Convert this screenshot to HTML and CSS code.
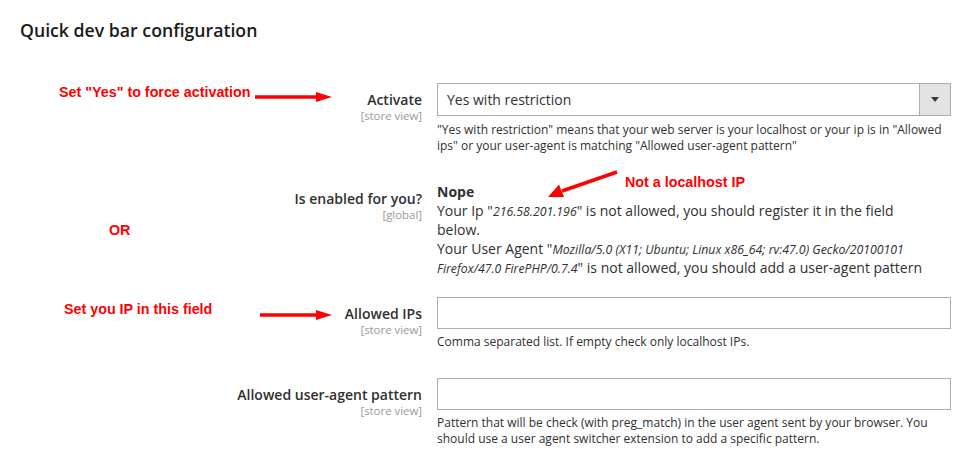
FILE: index.html
```html
<!DOCTYPE html>
<html>
<head>
<meta charset="utf-8">
<link rel="stylesheet" href="styles.css">
</head>
<body>
<div class="page">
  <h1 class="title">Quick dev bar configuration</h1>
  <div class="form">
    <div class="row">
      <div class="label"><span class="label-text">Activate</span><span class="scope">[store view]</span></div>
      <div class="control">
        <div class="select">
          <span class="select-value">Yes with restriction</span>
          <span class="select-btn"><svg width="8" height="5" viewBox="0 0 8 5"><polygon points="0,0 8,0 4,5" fill="#41362f"/></svg></span>
        </div>
        <p class="note">"Yes with restriction" means that your web server is your localhost or your ip is in "Allowed ips" or your user-agent is matching "Allowed user-agent pattern"</p>
      </div>
    </div>
    <div class="row row-tight">
      <div class="label label-value"><span class="label-text">Is enabled for you?</span><span class="scope">[global]</span></div>
      <div class="control">
        <div class="value">
          <strong class="value-title">Nope</strong><br>
          Your Ip "<em>216.58.201.196</em>" is not allowed, you should register it in the field below.<br>
          Your User Agent "<em>Mozilla/5.0 (X11; Ubuntu; Linux x86_64; rv:47.0) Gecko/20100101 Firefox/47.0 FirePHP/0.7.4</em>" is not allowed, you should add a user-agent pattern
        </div>
      </div>
    </div>
    <div class="row">
      <div class="label"><span class="label-text">Allowed IPs</span><span class="scope">[store view]</span></div>
      <div class="control">
        <div class="input"></div>
        <p class="note note-input">Comma separated list. If empty check only localhost IPs.</p>
      </div>
    </div>
    <div class="row">
      <div class="label"><span class="label-text">Allowed user-agent pattern</span><span class="scope">[store view]</span></div>
      <div class="control">
        <div class="input"></div>
        <p class="note note-input">Pattern that will be check (with preg_match) in the user agent sent by your browser. You should use a user agent switcher extension to add a specific pattern.</p>
      </div>
    </div>
  </div>

  <div class="annot annot-yes">Set "Yes" to force activation</div>
  <div class="annot annot-local">Not a localhost IP</div>
  <div class="annot annot-or">OR</div>
  <div class="annot annot-ip">Set you IP in this field</div>
  <svg class="arrows" width="956" height="451" viewBox="0 0 956 451">
    <line x1="255" y1="97" x2="318" y2="97" stroke="#ff0000" stroke-width="3.5"/>
    <polygon points="316,92 332,97 316,102" fill="#ff0000"/>
    <line x1="260" y1="315" x2="318" y2="315" stroke="#ff0000" stroke-width="3.5"/>
    <polygon points="316,310 332,315 316,320" fill="#ff0000"/>
    <line x1="617" y1="172" x2="562" y2="191" stroke="#ff0000" stroke-width="3.5"/>
    <polygon points="548,197 559,184.5 564,197" fill="#ff0000"/>
  </svg>
</div>
</body>
</html>
```
FILE: styles.css
```css
* { box-sizing: border-box; }
html, body { margin: 0; padding: 0; background: #fff; }
body {
  font-family: "Open Sans", "Liberation Sans", sans-serif;
  color: #303030;
  width: 956px;
  height: 451px;
  overflow: hidden;
}
.page {
  position: relative;
  width: 956px;
  height: 451px;
  padding: 18px 0 0 20px;
}
.title {
  margin: 0;
  font-size: 17.7px;
  font-weight: 600;
  line-height: 24px;
  color: #1a1a1a;
}
.form {
  margin-top: 41px;
}
.row {
  display: grid;
  grid-template-columns: 402px 514px;
  column-gap: 15px;
  margin-bottom: 28px;
}
.row-tight { margin-bottom: 20px; }
.label {
  display: flex;
  flex-direction: column;
  align-items: flex-end;
  text-align: right;
  padding-top: 7px;
}
.label-text {
  font-size: 14px;
  font-weight: 600;
  line-height: 19px;
  color: #303030;
}
.scope {
  font-size: 11.4px;
  line-height: 13px;
  color: #999;
}
.control { display: flex; flex-direction: column; }
.select {
  display: flex;
  height: 33px;
  border: 1px solid #adadad;
  background: #fff;
}
.select-value {
  flex: 1;
  font-size: 14px;
  line-height: 31px;
  padding-left: 9px;
  color: #303030;
}
.select-btn {
  width: 31px;
  border-left: 1px solid #adadad;
  background: #e3e3e3;
  display: flex;
  align-items: center;
  justify-content: center;
}
.input {
  height: 32px;
  border: 1px solid #adadad;
  background: #fff;
}
.note {
  margin: 6px 0 0 0;
  font-size: 12px;
  line-height: 16px;
  color: #303030;
}
.note-input { margin-top: 5px; }
.value {
  width: 500px;
  font-size: 14px;
  line-height: 19px;
  color: #303030;
}
.value-title { font-weight: 700; }
.value em { font-style: italic; font-size: 12.3px; line-height: 1; }

.annot {
  position: absolute;
  font-family: "Liberation Sans", Arial, sans-serif;
  font-weight: 700;
  font-size: 14.3px;
  line-height: 16px;
  color: #ff0000;
  white-space: nowrap;
}
.annot-yes { left: 59px; top: 84px; }
.annot-local { left: 625px; top: 174px; }
.annot-or { left: 109px; top: 222px; }
.annot-ip { left: 64px; top: 301px; }
.arrows {
  position: absolute;
  left: 0;
  top: 0;
  pointer-events: none;
}
```
